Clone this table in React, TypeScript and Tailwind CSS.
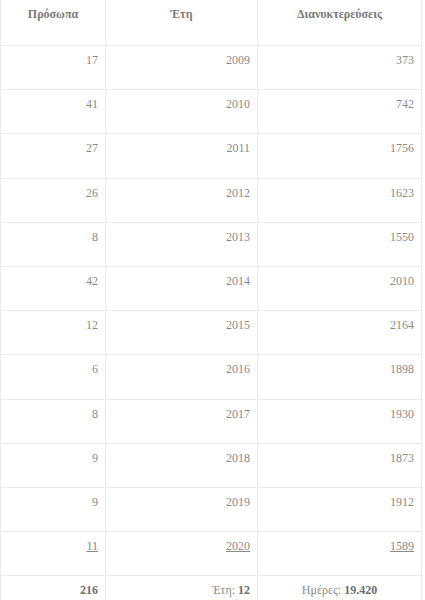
import React from 'react';

const rows = [
  { people: '17', year: '2009', nights: '373' },
  { people: '41', year: '2010', nights: '742' },
  { people: '27', year: '2011', nights: '1756' },
  { people: '26', year: '2012', nights: '1623' },
  { people: '8', year: '2013', nights: '1550' },
  { people: '42', year: '2014', nights: '2010' },
  { people: '12', year: '2015', nights: '2164' },
  { people: '6', year: '2016', nights: '1898' },
  { people: '8', year: '2017', nights: '1930' },
  { people: '9', year: '2018', nights: '1873' },
  { people: '9', year: '2019', nights: '1912' },
  { people: '11', year: '2020', nights: '1589', link: true },
];

const cell = 'border border-[#ebebeb] px-[7px] pt-[5px] align-top text-right';

const App = () => {
  return (
    <div className="w-[425px] h-[600px] overflow-hidden bg-white font-['Liberation_Serif',serif] text-[12px] leading-[18px] text-[#8a8a8a]">
      <table className="w-[421px] border-collapse table-fixed -mt-px">
        <colgroup>
          <col className="w-[105px]" />
          <col className="w-[152px]" />
          <col className="w-[164px]" />
        </colgroup>
        <thead>
          <tr className="h-[46px]">
            <th className="border border-[#ebebeb] pt-[5px] align-top text-center font-bold text-[#7a7a7a]">Πρόσωπα</th>
            <th className="border border-[#ebebeb] pt-[5px] align-top text-center font-bold text-[#7a7a7a]">Έτη</th>
            <th className="border border-[#ebebeb] pt-[5px] align-top text-center font-bold text-[#7a7a7a]">Διανυκτερεύσεις</th>
          </tr>
        </thead>
        <tbody>
          {rows.map((r) => (
            <tr key={r.year} className="h-[44.2px]">
              <td className={cell}>{r.link ? <span className="underline">{r.people}</span> : r.people}</td>
              <td className={cell}>{r.link ? <span className="underline">{r.year}</span> : r.year}</td>
              <td className={cell}>{r.link ? <span className="underline">{r.nights}</span> : r.nights}</td>
            </tr>
          ))}
          <tr className="h-[44px]">
            <td className={cell}><b className="text-[#6f6f6f]">216</b></td>
            <td className={cell}>Έτη: <b className="text-[#6f6f6f]">12</b></td>
            <td className="border border-[#ebebeb] pt-[5px] align-top text-center">Ημέρες: <b className="text-[#6f6f6f]">19.420</b></td>
          </tr>
        </tbody>
      </table>
    </div>
  );
};

export default App;
